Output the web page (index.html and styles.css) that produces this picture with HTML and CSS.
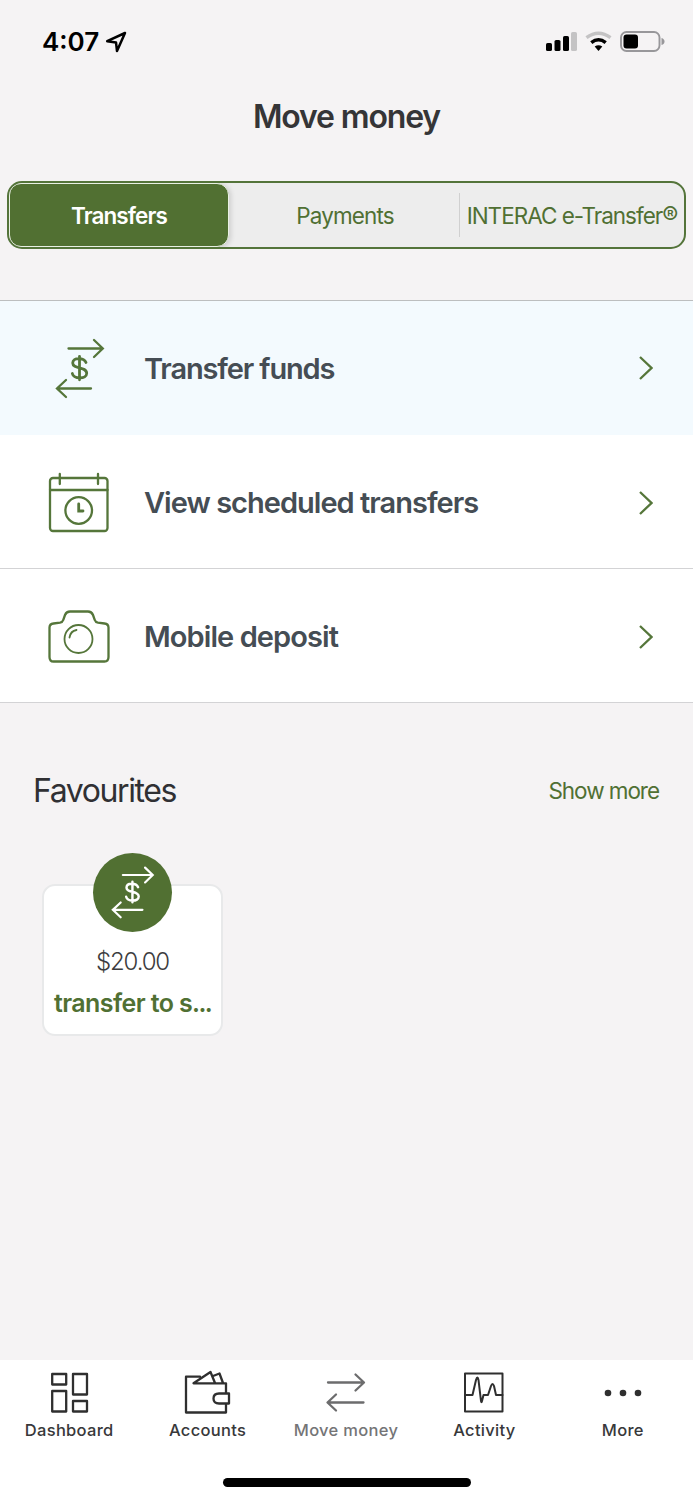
FILE: index.html
```
<!DOCTYPE html>
<html lang="en">
<head>
<meta charset="utf-8">
<title>Move money</title>
<link rel="stylesheet" href="styles.css">
</head>
<body>
<svg class="defs" width="0" height="0" aria-hidden="true">
  <symbol id="exchange" viewBox="0 0 62 62">
    <path d="M20.500 11.500H54M46 3L54.800 11.500L46 20M43 51.500H9.500M18 43L9 51.500L18 60"/>
    <path stroke-width="2.800" d="M38 25.500C36 20.300 24.700 20 24.700 26C24.700 32.500 38.700 29 38.700 36.300C38.700 42.500 25.700 42.300 24.300 36.500M31.500 19.300V42.800"/>
  </symbol>
</svg>
<div class="screen">
  <header class="status">
    <div class="status-left">
      <span class="time">4:07</span>
      <svg width="22" height="22" viewBox="0 0 22 22" fill="none" stroke="#000" stroke-width="2.500" stroke-linejoin="round"><path d="M20 2L2.200 10.200L11 11.400L12 20Z"/></svg>
    </div>
    <svg class="status-right" width="120" height="24" viewBox="0 0 120 24">
      <rect x="0" y="13" width="6" height="8" rx="1.600"/><rect x="8.500" y="10" width="6" height="11" rx="1.600"/><rect x="17" y="6" width="6" height="15" rx="1.600"/><rect x="25" y="2" width="6" height="19" rx="1.600" fill="#c4c3c4"/>
      <g fill="none" stroke-width="3.500"><path d="M40.500 7.600Q52.500 -1.200 64.500 7.600" stroke="#c4c3c4"/><path d="M45.300 12.600Q52.500 6.800 59.700 12.600" stroke="#000"/></g>
      <path d="M48.700 16.600Q52.500 13.800 56.300 16.600L52.500 21Z"/>
      <rect x="75" y="2" width="38.500" height="19" rx="5.500" fill="none" stroke="#98979a" stroke-width="1.900"/>
      <rect x="77.500" y="4.500" width="14.500" height="14" rx="3"/>
      <path d="M115.500 8Q118.500 9 118.500 11.500T115.500 15Z" fill="#98979a"/>
    </svg>
  </header>
  <h1 class="title"><span>Move money</span></h1>
  <nav class="segments">
    <a class="segment active"><span>Transfers</span></a>
    <a class="segment payments"><span>Payments</span></a>
    <a class="segment interac"><span>INTERAC e-Transfer<span class="reg">®</span></span></a>
  </nav>
  <main>
    <ul class="menu">
      <li class="row highlighted">
        <svg class="row-icon" viewBox="0 0 62 62"><use href="#exchange"/></svg>
        <span class="row-label l1">Transfer funds</span>
        <svg class="chevron" viewBox="0 0 14 26"><path d="M1 2L12.500 13L1 24"/></svg>
      </li>
      <li class="row">
        <svg class="row-icon" viewBox="0 0 62 62"><rect x="2" y="6" width="57.500" height="53" rx="3"/><path d="M2 18H59.500M11.800 2V12M50 2V12"/><circle cx="30.700" cy="38.500" r="13.300"/><path d="M30.700 32V39H35" stroke-width="2.800"/></svg>
        <span class="row-label l2">View scheduled transfers</span>
        <svg class="chevron" viewBox="0 0 14 26"><path d="M1 2L12.500 13L1 24"/></svg>
      </li>
      <li class="row">
        <svg class="row-icon" viewBox="0 0 62 62"><path d="M5.500 17.500L12 16.700Q14.500 16.300 15.200 14L17 9Q18.500 5.500 22 5.500H40Q43.500 5.500 45 9L46.800 14Q47.500 16.300 50 16.700L56.500 17.500Q60.500 18 60.500 21.500V51Q60.500 55.500 56.500 55.500H5.500Q1.500 55.500 1.500 51V21.500Q1.500 18 5.500 17.500Z"/><circle cx="30.500" cy="33" r="14" stroke-width="1.800"/><path d="M21.500 31.500Q22.500 25 28.500 24" stroke-width="1.800"/></svg>
        <span class="row-label l3">Mobile deposit</span>
        <svg class="chevron" viewBox="0 0 14 26"><path d="M1 2L12.500 13L1 24"/></svg>
      </li>
    </ul>
    <section class="favourites">
      <div class="section-head">
        <h2>Favourites</h2>
        <a class="more">Show more</a>
      </div>
      <article class="card">
        <div class="badge"><svg viewBox="0 0 62 62"><use href="#exchange"/></svg></div>
        <span class="amount">$20.00</span>
        <span class="name">transfer to s<span class="dots">...</span></span>
      </article>
    </section>
  </main>
  <footer class="tabs">
    <a class="tab t1"><svg viewBox="0 0 48 44"><path d="M7.200 4H21.200V14.500H7.200ZM28 4H42V24.500H28ZM7.200 21H21.200V41.500H7.200ZM28 31H42V41.500H28Z"/></svg><span>Dashboard</span></a>
    <a class="tab t2"><svg viewBox="0 0 48 44"><path d="M16 6.700H2V42.500H42V34M42 22.500V13.300H9.500L26.500 2L31 13M29 6L35.500 3.500L39 13M45 23.500H35Q29.500 23.500 29.500 28.500T35 33.500H45Z"/></svg><span>Accounts</span></a>
    <a class="tab t3"><svg viewBox="0 0 48 44"><path d="M6 12.500H41M33.500 4.500L42 12.500L33.500 20.500M41.500 32.500H6M14 24.500L5.500 32.500L14 40.500"/></svg><span>Move money</span></a>
    <a class="tab t4"><svg viewBox="0 0 48 44"><path d="M5 3.500H42.500V41.500H5Z"/><path d="M5 25H12.500L16 10Q17.500 5 18.500 10L21 31Q21.500 33.500 22 31L23.500 25H28L31 16Q32.500 12 34 16L36 25H42.500"/></svg><span>Activity</span></a>
    <a class="tab t5"><svg viewBox="0 0 48 44"><g fill="#2f2f2f" stroke="none"><circle cx="9" cy="23" r="3.300"/><circle cx="24" cy="23" r="3.300"/><circle cx="39" cy="23" r="3.300"/></g></svg><span>More</span></a>
  </footer>
  <div class="home"><span></span></div>
</div>
</body>
</html>
```
FILE: styles.css
```
* { box-sizing: border-box; }
body { margin: 0; font-family: Inter, "Liberation Sans", sans-serif; background: #f5f3f4; color: #303033; }
.defs { display: block; }
.screen { width: 693px; height: 1500px; display: flex; flex-direction: column; overflow: hidden; }
.status { height: 84px; padding: 0 27px 0 42px; display: flex; align-items: center; justify-content: space-between; color: #000; }
.status-left { display: flex; align-items: center; gap: 6px; }
.time { font-size: 26px; font-weight: 600; line-height: 32px; }
.title { margin: 0; height: 64px; line-height: 65px; font-size: 32px; font-weight: 600; letter-spacing: -1.150px; text-align: center; color: #353537; }
.segments { margin: 33px 7px 0; height: 68px; flex: none; border: 2px solid #54743a; border-radius: 15px; background: #ededed; display: flex; overflow: hidden; }
.segment { display: flex; align-items: center; justify-content: center; font-size: 22.500px; letter-spacing: -0.900px; color: #507033; white-space: nowrap; }
.segment.active { width: 220px; border: 1px solid #e9f0e4; border-radius: 12px; background: #517032; color: #fff; font-weight: 600; box-shadow: 2px 1px 5px #0002; }
.segment.payments { width: 230px; padding-left: 2px; }
.segment.interac { flex: 1; margin: 10px 0; border-left: 1px solid #d0d0d0; letter-spacing: -1px; }
.reg { font-size: 24px; line-height: 20px; }
.menu { list-style: none; margin: 51px 0 0; padding: 0; border-top: 1px solid #bcbebf; background: #fff; }
.row { height: 134px; display: flex; align-items: center; padding: 2px 40px 0 48px; border-bottom: 1px solid #d3d3d5; }
.row.highlighted { background: #f3fafe; border-bottom: 0; padding-top: 0; }
.row-icon { width: 62px; height: 62px; fill: none; stroke: #55763a; stroke-width: 2.300; stroke-linecap: round; }
.row-label { flex: 1; margin-left: 34px; font-size: 29px; font-weight: 600; color: #454d54; white-space: nowrap; }
.l1 { letter-spacing: -1.150px; }
.l2 { letter-spacing: -0.980px; }
.l3 { letter-spacing: -0.920px; }
.chevron { width: 14px; height: 26px; fill: none; stroke: #55763a; stroke-width: 2.300; }
.favourites { padding: 64px 34px 0; }
.section-head { display: flex; align-items: center; justify-content: space-between; height: 46px; }
.section-head h2 { margin: 0 0 0 -1px; font-size: 32px; font-weight: 400; letter-spacing: -1.400px; color: #303033; }
.more { font-size: 22.500px; letter-spacing: -1.050px; color: #507033; }
.card { margin: 71px 0 0 8px; width: 181px; height: 152px; border: 2px solid #e8e9ea; border-radius: 13px; background: #fff; display: flex; flex-direction: column; align-items: center; white-space: nowrap; }
.badge { width: 79px; height: 79px; flex: none; margin-top: -33px; border-radius: 50%; background: #517032; display: flex; align-items: center; justify-content: center; padding: 0 2px 2px 0; }
.badge svg { width: 54px; height: 54px; fill: none; stroke: #fff; stroke-width: 2.500; stroke-linecap: round; }
.amount { margin-top: 14px; font-size: 24px; line-height: 32px; font-weight: 300; letter-spacing: -1.150px; color: #3c3c3e; }
.name { margin-top: 8px; font-size: 25px; line-height: 34px; font-weight: 600; letter-spacing: -0.600px; color: #507033; }
.dots { letter-spacing: -1.700px; }
.tabs { margin-top: auto; height: 100px; flex: none; background: #fff; display: flex; padding: 10px 1px 0 0; }
.tab { flex: 1; display: flex; flex-direction: column; align-items: center; font-size: 16.500px; font-weight: 500; letter-spacing: 0.300px; color: #38383a; }
.tab svg { width: 48px; height: 44px; fill: none; stroke: #2f2f2f; stroke-width: 2.300; stroke-linejoin: round; stroke-linecap: round; }
.tab span { margin-top: 5px; line-height: 22px; white-space: nowrap; }
.t3 { color: #747476; }
.t3 svg { stroke: #6c6c6d; }
.t4 svg { stroke-width: 2; }
.home { height: 40px; flex: none; background: #fff; display: flex; justify-content: center; padding-top: 18px; }
.home span { width: 248px; height: 9px; border-radius: 5px; background: #000; }
```
